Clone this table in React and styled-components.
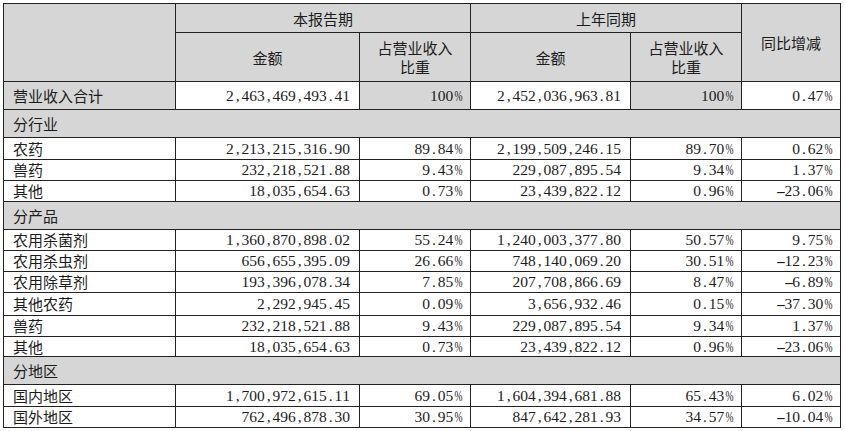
import React from 'react'
import styled, { createGlobalStyle } from 'styled-components'

const GlobalStyle = createGlobalStyle`
  body {
    margin: 0;
    background: #ffffff;
    font-family: "Noto Sans CJK SC", "Liberation Serif", serif;
    color: #1c1c1c;
  }
`

const GRAY = '#d6d6d6'

const Page = styled.div`
  padding: 3px 0 0 3px;
`

const Table = styled.table`
  border-collapse: collapse;
  table-layout: fixed;
  width: 837px;
  font-size: 15px;
  border: 1px solid #222;
`

const Row = styled.tr`
  height: ${p => p.h || 21}px;
`

const HeadCell = styled.th`
  background: ${GRAY};
  border: 1px solid #222;
  font-weight: 400;
  text-align: center;
  vertical-align: middle;
  line-height: 19px;
  padding: 0 4px;
`

const LabelCell = styled.td`
  background: ${p => (p.gray ? GRAY : '#fff')};
  border: 1px solid #222;
  padding: 0 0 0 9px;
  white-space: nowrap;
  line-height: 18px;
`

const SectionCell = styled.td`
  background: ${GRAY};
  border: 1px solid #222;
  padding: 0 0 0 9px;
  line-height: 18px;
`

const NumCell = styled.td`
  background: ${p => (p.gray ? GRAY : '#fff')};
  border: 1px solid #222;
  text-align: right;
  padding: 0 9px 0 0;
  font-family: "Liberation Serif", serif;
  font-size: 15.5px;
  line-height: 18px;
  white-space: nowrap;
`

// SimSun-style half-width cells: every character takes 0.5em
const Glyph = styled.span`
  display: inline-block;
  width: 7.75px;
  text-align: center;
  transform: ${p => (p.c === '%' ? 'scaleX(0.62)' : p.c === '-' ? 'scaleX(1.9)' : 'none')};
`

const Num = ({ v }) => (
  <>
    {[...v].map((c, i) => (
      <Glyph key={i} c={c}>{c}</Glyph>
    ))}
  </>
)

const sections = [
  {
    title: '分行业',
    rows: [
      ['农药', '2,213,215,316.90', '89.84%', '2,199,509,246.15', '89.70%', '0.62%', 22],
      ['兽药', '232,218,521.88', '9.43%', '229,087,895.54', '9.34%', '1.37%', 21],
      ['其他', '18,035,654.63', '0.73%', '23,439,822.12', '0.96%', '-23.06%', 21],
    ],
  },
  {
    title: '分产品',
    rows: [
      ['农用杀菌剂', '1,360,870,898.02', '55.24%', '1,240,003,377.80', '50.57%', '9.75%', 21],
      ['农用杀虫剂', '656,655,395.09', '26.66%', '748,140,069.20', '30.51%', '-12.23%', 21],
      ['农用除草剂', '193,396,078.34', '7.85%', '207,708,866.69', '8.47%', '-6.89%', 21],
      ['其他农药', '2,292,945.45', '0.09%', '3,656,932.46', '0.15%', '-37.30%', 23],
      ['兽药', '232,218,521.88', '9.43%', '229,087,895.54', '9.34%', '1.37%', 21],
      ['其他', '18,035,654.63', '0.73%', '23,439,822.12', '0.96%', '-23.06%', 20],
    ],
  },
  {
    title: '分地区',
    rows: [
      ['国内地区', '1,700,972,615.11', '69.05%', '1,604,394,681.88', '65.43%', '6.02%', 22],
      ['国外地区', '762,496,878.30', '30.95%', '847,642,281.93', '34.57%', '-10.04%', 21],
    ],
  },
]

export default function App() {
  return (
    <Page>
      <GlobalStyle />
      <Table>
        <colgroup>
          <col style={{ width: 172 }} />
          <col style={{ width: 184 }} />
          <col style={{ width: 111 }} />
          <col style={{ width: 160 }} />
          <col style={{ width: 111 }} />
          <col style={{ width: 99 }} />
        </colgroup>
        <thead>
          <Row h={29}>
            <HeadCell rowSpan={2} />
            <HeadCell colSpan={2}>本报告期</HeadCell>
            <HeadCell colSpan={2}>上年同期</HeadCell>
            <HeadCell rowSpan={2}>同比增减</HeadCell>
          </Row>
          <Row h={49}>
            <HeadCell>金额</HeadCell>
            <HeadCell>占营业收入<br />比重</HeadCell>
            <HeadCell>金额</HeadCell>
            <HeadCell>占营业收入<br />比重</HeadCell>
          </Row>
        </thead>
        <tbody>
          <Row h={28}>
            <LabelCell gray>营业收入合计</LabelCell>
            <NumCell><Num v="2,463,469,493.41" /></NumCell>
            <NumCell gray><Num v="100%" /></NumCell>
            <NumCell><Num v="2,452,036,963.81" /></NumCell>
            <NumCell gray><Num v="100%" /></NumCell>
            <NumCell><Num v="0.47%" /></NumCell>
          </Row>
          {sections.map(s => (
            <React.Fragment key={s.title}>
              <Row h={28}>
                <SectionCell colSpan={6}>{s.title}</SectionCell>
              </Row>
              {s.rows.map(r => (
                <Row h={r[6]} key={s.title + r[0]}>
                  <LabelCell>{r[0]}</LabelCell>
                  {r.slice(1, 6).map((v, i) => (
                    <NumCell key={i}><Num v={v} /></NumCell>
                  ))}
                </Row>
              ))}
            </React.Fragment>
          ))}
        </tbody>
      </Table>
    </Page>
  )
}
